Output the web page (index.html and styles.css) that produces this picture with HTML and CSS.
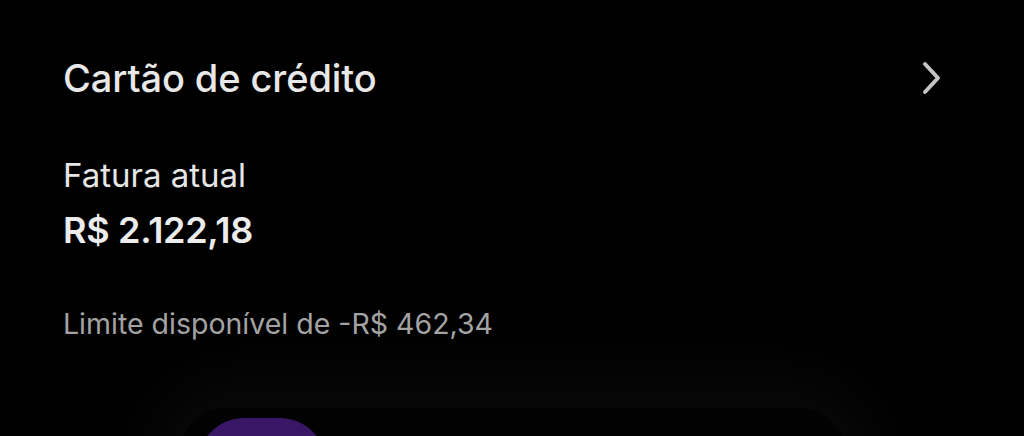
FILE: index.html
```html
<!DOCTYPE html>
<html lang="pt-BR">
<head>
<meta charset="utf-8">
<link rel="stylesheet" href="styles.css">
</head>
<body>
<main class="screen">
  <section class="card-section">
    <header class="section-head">
      <h1 class="title">Cartão de crédito</h1>
      <svg class="chevron" viewBox="0 0 24 36" width="24" height="36" aria-hidden="true">
        <path d="M5 4 L18 18 L5 32" fill="none" stroke="#c4c4c4" stroke-width="4" stroke-linecap="round" stroke-linejoin="round"/>
      </svg>
    </header>
    <div class="invoice">
      <p class="label">Fatura atual</p>
      <p class="amount">R$ 2.122,18</p>
    </div>
    <p class="limit">Limite disponível de -R$ 462,34</p>
  </section>
  <div class="promo">
    <div class="promo-icon"></div>
  </div>
</main>
</body>
</html>
```

FILE: styles.css
```css
* { box-sizing: border-box; }
html, body {
  margin: 0;
  padding: 0;
  background: #000;
  width: 1024px;
  height: 436px;
  overflow: hidden;
}
body {
  font-family: Inter, "Noto Sans", sans-serif;
  color: #e6e6e6;
}
.screen {
  display: flex;
  flex-direction: column;
  height: 436px;
  overflow: hidden;
}
.card-section {
  padding: 52px 80px 0 63px;
  display: flex;
  flex-direction: column;
}
.section-head {
  display: flex;
  align-items: center;
  justify-content: space-between;
  height: 52px;
}
.title {
  margin: 0;
  font-size: 38px;
  line-height: 52px;
  font-weight: 500;
  letter-spacing: -0.1px;
  color: #e8e8e8;
}
.chevron {
  display: block;
  margin-right: 0;
}
.invoice {
  margin-top: 51px;
  display: flex;
  flex-direction: column;
  gap: 15px;
}
.label {
  margin: 0;
  font-size: 33px;
  font-weight: 400;
  line-height: 40px;
  color: #e6e6e6;
}
.amount {
  margin: 0;
  font-size: 36px;
  font-weight: 600;
  line-height: 40px;
  letter-spacing: -0.3px;
  color: #ececec;
}
.limit {
  margin: 56px 0 0;
  font-size: 28.5px;
  line-height: 36px;
  color: #a3a3a3;
}
.promo {
  flex: none;
  margin: 66px 0 0 180px;
  width: 665px;
  height: 160px;
  border-radius: 46px;
  background: #020202;
  padding: 10px 18px;
  box-shadow: 0 0 80px 24px rgba(255, 255, 255, 0.045);
}
.promo-icon {
  width: 128px;
  height: 128px;
  border-radius: 46px;
  background: #3a1766;
}
```
